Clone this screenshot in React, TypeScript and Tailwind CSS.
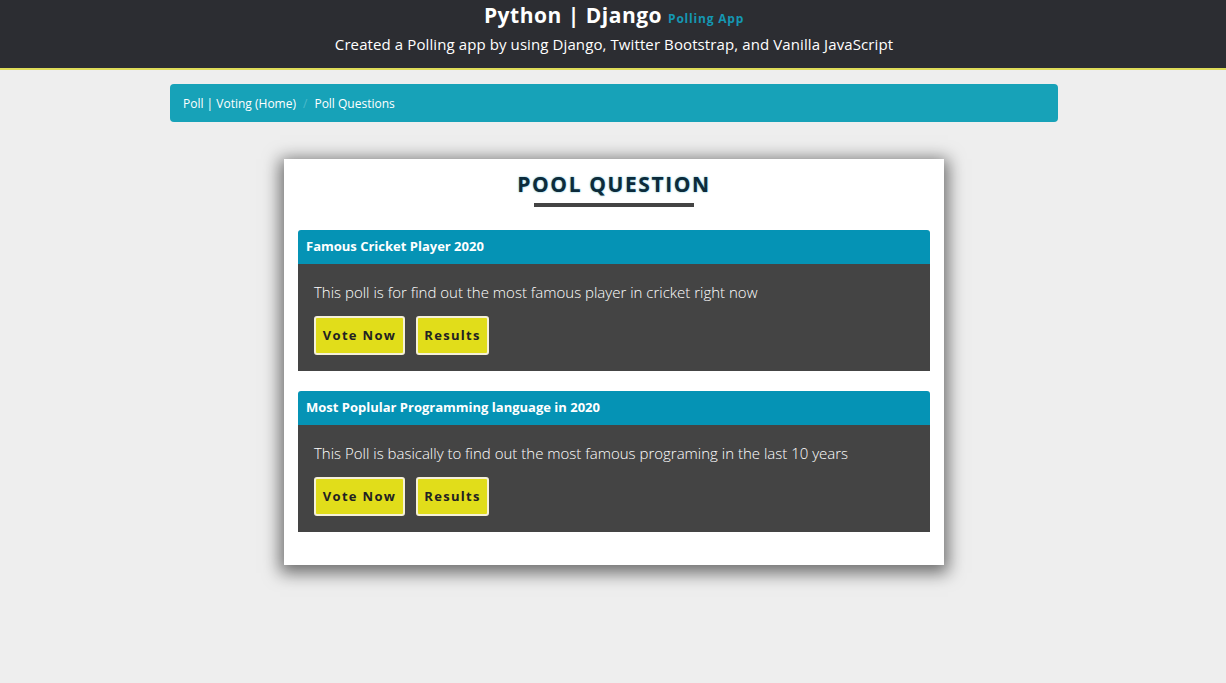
const polls = [
  {
    title: "Famous Cricket Player 2020",
    text: "This poll is for find out the most famous player in cricket right now",
  },
  {
    title: "Most Poplular Programming language in 2020",
    text: "This Poll is basically to find out the most famous programing in the last 10 years",
  },
];

export default function App() {
  return (
    <div
      className="min-h-[683px] bg-[#eeeeee]"
      style={{ fontFamily: '"Open Sans", "Noto Sans", sans-serif' }}
    >
      <header className="h-[70px] bg-[#2c2d32] border-b-2 border-[#dedc5a] text-center text-white">
        <h1 className="pt-[1px] pl-[2px] text-[21px] font-bold tracking-[0.5px] leading-[28px]">
          Python | Django{" "}
          <span className="text-[12px] text-[#1597b3] tracking-[0.8px]">Polling App</span>
        </h1>
        <p className="-mt-[2px] pl-[2px] text-[15px] leading-[26px] tracking-[0.1px]">
          Created a Polling app by using Django, Twitter Bootstrap, and Vanilla JavaScript
        </p>
      </header>

      <div className="flex justify-center pl-[2px] mt-[14px]">
        <nav className="w-[888px] h-[38px] rounded bg-[#17a2b8] flex items-center px-[13px] pt-[1px] text-[12px] text-white">
          <span>Poll | Voting (Home)</span>
          <span className="px-[7px] text-[#4cbacb]">/</span>
          <span>Poll Questions</span>
        </nav>
      </div>

      <div className="flex justify-center pl-[2px] mt-[37px]">
        <main className="w-[660px] bg-white px-[14px] pt-[10px] pb-[33px] shadow-[0_4px_16px_4px_rgba(0,0,0,0.55)]">
          <div className="flex flex-col items-center">
            <h2
              className="text-[21px] font-bold tracking-[1.6px] text-[#0c2b3b] leading-[30px]"
              style={{ textShadow: "0 0 2px #5fb6c9" }}
            >
              POOL QUESTION
            </h2>
            <div className="mt-[4px] w-[160px] h-[4px] bg-[#444444]" />
          </div>

          <div className="mt-[23px] flex flex-col gap-[20px]">
            {polls.map((p) => (
              <section key={p.title}>
                <div className="h-[34px] rounded-t-[3px] bg-[#0593b5] flex items-center px-[8px] text-[13px] font-bold text-white">
                  {p.title}
                </div>
                <div className="bg-[#444444] px-[16px] pt-[16px] pb-[16px]">
                  <p className="text-[15px] font-light text-white leading-[24px]">{p.text}</p>
                  <div className="mt-[12px] flex gap-[11px]">
                    <button className="h-[39px] w-[91px] rounded-[3px] border-2 border-[#f5f0d8] bg-[#e1dd1a] text-[13px] font-bold tracking-[1.3px] text-[#222222]">
                      Vote Now
                    </button>
                    <button className="h-[39px] w-[73px] rounded-[3px] border-2 border-[#f5f0d8] bg-[#e1dd1a] text-[13px] font-bold tracking-[1.3px] text-[#222222]">
                      Results
                    </button>
                  </div>
                </div>
              </section>
            ))}
          </div>
        </main>
      </div>
    </div>
  );
}
